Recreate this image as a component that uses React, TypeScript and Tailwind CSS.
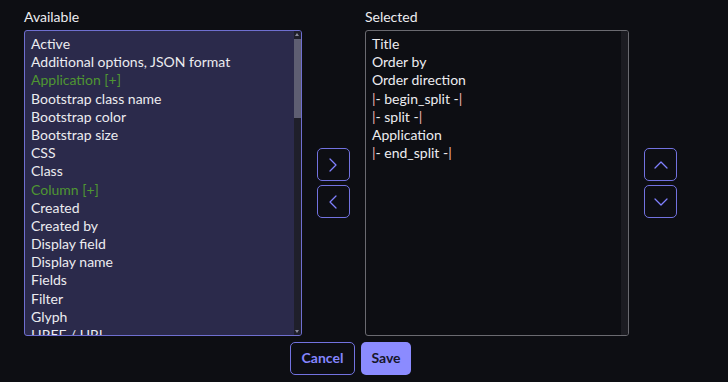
import { ChevronRight, ChevronLeft, ChevronUp, ChevronDown } from "lucide-react"

type Item = { label: string; group?: boolean }

const available: Item[] = [
  { label: "Active" },
  { label: "Additional options, JSON format" },
  { label: "Application [+]", group: true },
  { label: "Bootstrap class name" },
  { label: "Bootstrap color" },
  { label: "Bootstrap size" },
  { label: "CSS" },
  { label: "Class" },
  { label: "Column [+]", group: true },
  { label: "Created" },
  { label: "Created by" },
  { label: "Display field" },
  { label: "Display name" },
  { label: "Fields" },
  { label: "Filter" },
  { label: "Glyph" },
  { label: "HREF / URL" },
]

const selected = ["Title", "Order by", "Order direction", "|- begin_split -|", "|- split -|", "Application", "|- end_split -|"]

// splits render their pipes in a soft red
function SelectedLabel({ text }: { text: string }) {
  if (!text.startsWith("|-")) return <>{text}</>
  const inner = text.slice(1, -1)
  return (
    <>
      <span className="text-[#eeb4b4]">|</span>
      {inner}
      <span className="text-[#eeb4b4]">|</span>
    </>
  )
}

function IconButton({ children }: { children: React.ReactNode }) {
  return (
    <button className="flex h-[33px] w-[33px] items-center justify-center rounded-[5px] border border-[#7272e0] text-[#8080ff]">
      {children}
    </button>
  )
}

export default function App() {
  return (
    <div className="min-h-screen bg-[#0d0e13] pl-6 pt-2 font-['Lato','Noto_Sans',sans-serif] text-[14px] leading-[1.3] text-[#ececf0]">
      <div className="flex w-[653px] flex-col">
        <div className="flex items-end gap-[15px]">
          {/* Available */}
          <div className="flex w-[279px] flex-col">
            <div className="mb-[4px] leading-[18px]">Available</div>
            <div className="flex h-[306px] overflow-hidden rounded-[3px] border border-[#6f6fd0] bg-[#2b2a4b]">
              <div className="flex-1 overflow-hidden px-[6px] pt-[4px]">
                {available.map((item) => (
                  <div key={item.label} className={`whitespace-nowrap ${item.group ? "text-[#4f9632]" : ""}`}>
                    {item.label}
                  </div>
                ))}
              </div>
              <div className="flex w-[7px] flex-col bg-[#1f1f2a]">
                <div className="flex h-[7px] items-center justify-center">
                  <div className="h-0 w-0 border-x-[2px] border-b-[3px] border-x-transparent border-b-[#8a8a9a]" />
                </div>
                <div className="mt-[1px] h-[79px] bg-[#5e5e72]" />
                <div className="flex-1" />
                <div className="flex h-[7px] items-center justify-center">
                  <div className="h-0 w-0 border-x-[2px] border-t-[3px] border-x-transparent border-t-[#8a8a9a]" />
                </div>
              </div>
            </div>
          </div>

          {/* Move buttons */}
          <div className="flex h-[306px] flex-col justify-center gap-[4px]">
            <IconButton>
              <ChevronRight size={24} strokeWidth={1.25} />
            </IconButton>
            <IconButton>
              <ChevronLeft size={24} strokeWidth={1.25} />
            </IconButton>
          </div>

          {/* Selected */}
          <div className="flex w-[265px] flex-col">
            <div className="mb-[4px] leading-[18px]">Selected</div>
            <div className="flex h-[306px] overflow-hidden rounded-[3px] border border-[#6a6a70] bg-[#0d0e13]">
              <div className="flex-1 overflow-hidden px-[6px] pt-[4px]">
                {selected.map((s) => (
                  <div key={s} className="whitespace-nowrap">
                    <SelectedLabel text={s} />
                  </div>
                ))}
              </div>
              <div className="w-[7px] bg-[#1c1c22]" />
            </div>
          </div>

          {/* Order buttons */}
          <div className="flex h-[306px] flex-col justify-center gap-[4px]">
            <IconButton>
              <ChevronUp size={24} strokeWidth={1.25} />
            </IconButton>
            <IconButton>
              <ChevronDown size={24} strokeWidth={1.25} />
            </IconButton>
          </div>
        </div>

        <div className="mt-[6px] flex justify-center gap-[6px]">
          <button className="h-[33px] w-[65px] rounded-[5px] border border-[#7272e0] text-[14px] font-bold text-[#8585ff]">
            Cancel
          </button>
          <button className="h-[33px] w-[50px] rounded-[5px] bg-[#8b8bff] text-[14px] font-bold text-[#16162a]">
            Save
          </button>
        </div>
      </div>
    </div>
  )
}
